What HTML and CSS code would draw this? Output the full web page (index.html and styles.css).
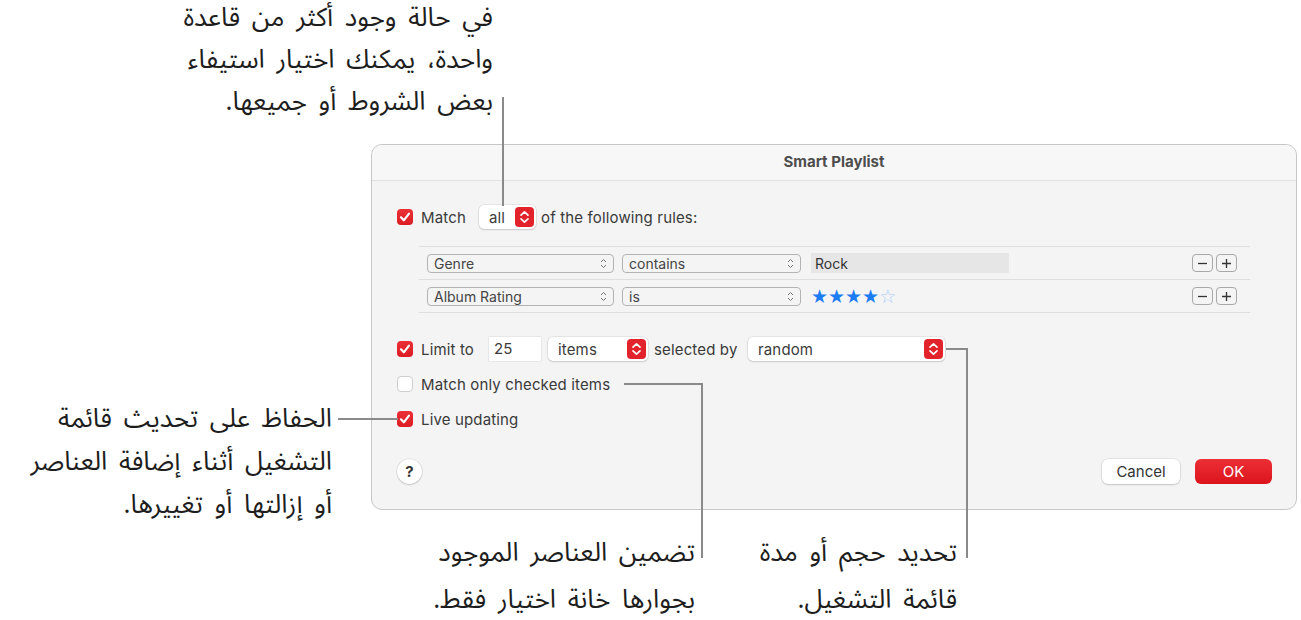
FILE: index.html
```html
<!DOCTYPE html>
<html lang="ar">
<head>
  <meta charset="UTF-8" />
  <title>Smart Playlist</title>
  <link rel="stylesheet" href="styles.css">
</head>
<body>
  <div class="page">

    <div class="dialog">
      <div class="titlebar">Smart Playlist</div>

      <div class="content">
        <div class="row">
          <span class="check on">
            <svg width="16" height="16" viewBox="0 0 16 16"><path d="M4 8.3l2.8 3L12 4.6" stroke="#fff" stroke-width="2.2" fill="none" stroke-linecap="round" stroke-linejoin="round"/></svg>
          </span>
          <span class="label w-match">Match</span>
          <span class="popup popup-all">
            <span>all</span>
            <svg class="arrows" width="19" height="20" viewBox="0 0 19 20"><rect width="19" height="20" rx="4" fill="#e3232b"/><path d="M6 8.2l3.5-3.4 3.5 3.4M6 11.8l3.5 3.4 3.5-3.4" stroke="#fff" stroke-width="1.7" fill="none" stroke-linecap="round" stroke-linejoin="round"/></svg>
          </span>
          <span class="label">of the following rules:</span>
        </div>

        <div class="rules">
          <div class="rule">
            <span class="select w-field">Genre
              <svg width="7" height="11" viewBox="0 0 7 11"><path d="M1 4l2.5-2.5L6 4M1 7l2.5 2.5L6 7" stroke="#777" stroke-width="1" fill="none"/></svg>
            </span>
            <span class="select w-op">contains
              <svg width="7" height="11" viewBox="0 0 7 11"><path d="M1 4l2.5-2.5L6 4M1 7l2.5 2.5L6 7" stroke="#777" stroke-width="1" fill="none"/></svg>
            </span>
            <span class="field">Rock</span>
            <span class="pm">
              <span class="pm-btn"><svg width="11" height="11" viewBox="0 0 11 11"><path d="M1 5.5h9" stroke="#333" stroke-width="1.3"/></svg></span>
              <span class="pm-btn"><svg width="11" height="11" viewBox="0 0 11 11"><path d="M1 5.5h9M5.5 1v9" stroke="#333" stroke-width="1.3"/></svg></span>
            </span>
          </div>
          <div class="rule">
            <span class="select w-field">Album Rating
              <svg width="7" height="11" viewBox="0 0 7 11"><path d="M1 4l2.5-2.5L6 4M1 7l2.5 2.5L6 7" stroke="#777" stroke-width="1" fill="none"/></svg>
            </span>
            <span class="select w-op">is
              <svg width="7" height="11" viewBox="0 0 7 11"><path d="M1 4l2.5-2.5L6 4M1 7l2.5 2.5L6 7" stroke="#777" stroke-width="1" fill="none"/></svg>
            </span>
            <span class="stars">★★★★<span class="star-off">☆</span></span>
            <span class="pm">
              <span class="pm-btn"><svg width="11" height="11" viewBox="0 0 11 11"><path d="M1 5.5h9" stroke="#333" stroke-width="1.3"/></svg></span>
              <span class="pm-btn"><svg width="11" height="11" viewBox="0 0 11 11"><path d="M1 5.5h9M5.5 1v9" stroke="#333" stroke-width="1.3"/></svg></span>
            </span>
          </div>
        </div>

        <div class="row limit-row">
          <span class="check on">
            <svg width="16" height="16" viewBox="0 0 16 16"><path d="M4 8.3l2.8 3L12 4.6" stroke="#fff" stroke-width="2.2" fill="none" stroke-linecap="round" stroke-linejoin="round"/></svg>
          </span>
          <span class="label w-limit">Limit to</span>
          <span class="num">25</span>
          <span class="popup popup-items">
            <span>items</span>
            <svg class="arrows" width="19" height="20" viewBox="0 0 19 20"><rect width="19" height="20" rx="4" fill="#e3232b"/><path d="M6 8.2l3.5-3.4 3.5 3.4M6 11.8l3.5 3.4 3.5-3.4" stroke="#fff" stroke-width="1.7" fill="none" stroke-linecap="round" stroke-linejoin="round"/></svg>
          </span>
          <span class="label w-sel">selected by</span>
          <span class="popup popup-random">
            <span>random</span>
            <svg class="arrows" width="19" height="20" viewBox="0 0 19 20"><rect width="19" height="20" rx="4" fill="#e3232b"/><path d="M6 8.2l3.5-3.4 3.5 3.4M6 11.8l3.5 3.4 3.5-3.4" stroke="#fff" stroke-width="1.7" fill="none" stroke-linecap="round" stroke-linejoin="round"/></svg>
          </span>
        </div>

        <div class="row small-row">
          <span class="check"></span>
          <span class="label">Match only checked items</span>
        </div>

        <div class="row small-row">
          <span class="check on">
            <svg width="16" height="16" viewBox="0 0 16 16"><path d="M4 8.3l2.8 3L12 4.6" stroke="#fff" stroke-width="2.2" fill="none" stroke-linecap="round" stroke-linejoin="round"/></svg>
          </span>
          <span class="label">Live updating</span>
        </div>

        <div class="footer">
          <span class="help">?</span>
          <span class="btn cancel">Cancel</span>
          <span class="btn ok">OK</span>
        </div>
      </div>
    </div>

    <!-- callouts -->
    <div class="note note-top">في حالة وجود أكثر من قاعدة<br>واحدة، يمكنك اختيار استيفاء<br>بعض الشروط أو جميعها.</div>
    <div class="note note-left">الحفاظ على تحديث قائمة<br>التشغيل أثناء إضافة العناصر<br>أو إزالتها أو تغييرها.</div>
    <div class="note note-mid">تضمين العناصر الموجود<br>بجوارها خانة اختيار فقط.</div>
    <div class="note note-right">تحديد حجم أو مدة<br>قائمة التشغيل.</div>

    <div class="line line-top"></div>
    <div class="line line-left"></div>
    <div class="line line-mid-h"></div>
    <div class="line line-mid-v"></div>
    <div class="line line-right-h"></div>
    <div class="line line-right-v"></div>
  </div>
</body>
</html>
```

FILE: styles.css
```css
body {
  margin: 0;
  background: #fff;
  font-family: Inter, "Liberation Sans", sans-serif;
  color: #3b3b3b;
}
.page {
  position: relative;
  width: 1301px;
  height: 620px;
  overflow: hidden;
  padding: 144px 0 0 371px;
  box-sizing: border-box;
}
.dialog {
  width: 926px;
  height: 366px;
  box-sizing: border-box;
  border: 1px solid #c6c6c6;
  border-radius: 11px;
  background: #f4f4f4;
  overflow: hidden;
}
.titlebar {
  height: 35px;
  line-height: 34px;
  background: #f7f7f7;
  border-bottom: 1px solid #e2e2e2;
  text-align: center;
  font-weight: 700;
  font-size: 15px;
  color: #4d4d4d;
}
.content {
  padding: 24px 24px 0 25px;
}
.row {
  display: flex;
  align-items: center;
  height: 24px;
  font-size: 15px;
  letter-spacing: 0.15px;
}
.label {
  margin-left: 8px;
  color: #3a3a3a;
  white-space: nowrap;
}
.w-match {
  width: 50px;
}
.w-limit {
  width: 56px;
}
.w-sel {
  width: 89px;
  margin-left: 6px;
}
.check {
  flex: none;
  width: 16px;
  height: 16px;
  box-sizing: border-box;
  border-radius: 4px;
  background: #fff;
  border: 1px solid #cfcfcf;
  display: flex;
}
.check.on {
  background: linear-gradient(#ea3036, #dc1c23);
  border: none;
}
.popup {
  flex: none;
  display: flex;
  align-items: center;
  height: 24px;
  box-sizing: border-box;
  background: #fff;
  border-radius: 5px;
  box-shadow: 0 0 0 0.5px rgba(0, 0, 0, 0.12), 0 1px 2px rgba(0, 0, 0, 0.12);
  padding: 0 2px 0 10px;
  justify-content: space-between;
}
.popup-all {
  width: 57px;
  margin: 0 -3px 0 8px;
}
.popup-items {
  width: 100px;
  margin-left: 7px;
}
.popup-random {
  width: 197px;
  margin-left: 5px;
}
.num {
  flex: none;
  width: 52px;
  height: 24px;
  line-height: 24px;
  box-sizing: border-box;
  padding-left: 5px;
  margin-left: 12px;
  background: #fff;
  box-shadow: 0 0 0 0.5px rgba(0, 0, 0, 0.1);
}

.rules {
  margin: 17px 22px 0 22px;
  border-top: 1px solid #dedede;
}
.rule {
  display: flex;
  align-items: center;
  height: 32px;
  border-bottom: 1px solid #dedede;
  padding: 0 13px 0 8px;
  font-size: 14px;
}
.select {
  display: flex;
  align-items: center;
  justify-content: space-between;
  height: 19px;
  box-sizing: border-box;
  border: 1px solid #b3b3b3;
  border-radius: 4px;
  padding: 0 6px 0 6px;
  color: #444;
}
.w-field {
  width: 187px;
}
.w-op {
  width: 179px;
  margin-left: 8px;
}
.field {
  width: 198px;
  height: 20px;
  line-height: 22px;
  background: #e6e6e6;
  margin-left: 10px;
  padding-left: 4px;
  box-sizing: border-box;
  color: #333;
}
.stars {
  margin-left: 10px;
  color: #1b7cf4;
  font-size: 19px;
  line-height: 20px;
  font-family: "DejaVu Sans", sans-serif;
}
.star-off {
  color: #a9cdf7;
}
.pm {
  margin-left: auto;
  display: flex;
  gap: 3px;
}
.pm-btn {
  width: 21px;
  height: 18px;
  box-sizing: border-box;
  border: 1px solid #a8a8a8;
  border-radius: 4px;
  display: flex;
  align-items: center;
  justify-content: center;
}

.limit-row {
  margin-top: 24px;
}
.small-row {
  margin-top: 11px;
}
.footer {
  display: flex;
  align-items: center;
  margin-top: 28px;
  height: 25px;
}
.help {
  width: 25px;
  height: 25px;
  border-radius: 50%;
  background: #fff;
  box-shadow: 0 0 0 0.5px rgba(0, 0, 0, 0.12), 0 1px 2px rgba(0, 0, 0, 0.15);
  text-align: center;
  line-height: 25px;
  font-weight: 700;
  font-size: 15px;
  color: #333;
}
.btn {
  height: 25px;
  line-height: 25px;
  border-radius: 6px;
  text-align: center;
  font-size: 15px;
}
.cancel {
  margin-left: auto;
  width: 78px;
  background: #fff;
  box-shadow: 0 0 0 0.5px rgba(0, 0, 0, 0.12), 0 1px 2px rgba(0, 0, 0, 0.15);
  color: #333;
}
.ok {
  margin-left: 15px;
  width: 77px;
  background: linear-gradient(#ec2f35, #dc141c);
  color: #fff;
}

/* callouts */
.note {
  position: absolute;
  direction: rtl;
  text-align: right;
  font-family: "Noto Sans Arabic", "DejaVu Sans", sans-serif;
  font-size: 26px;
  word-spacing: 5px;
  line-height: 42px;
  color: #1d1d1d;
  white-space: nowrap;
}
.note-top {
  right: 808px;
  top: -3px;
}
.note-left {
  right: 969px;
  top: 397px;
  line-height: 43px;
}
.note-mid {
  right: 606px;
  top: 529px;
  line-height: 47px;
}
.note-right {
  right: 344px;
  top: 529px;
  line-height: 47px;
}
.line {
  position: absolute;
  background: #8a8a8a;
}
.line-top {
  left: 502px;
  top: 97px;
  width: 2px;
  height: 109px;
}
.line-left {
  left: 338px;
  top: 418px;
  width: 60px;
  height: 2px;
}
.line-mid-h {
  left: 624px;
  top: 383px;
  width: 79px;
  height: 2px;
}
.line-mid-v {
  left: 701px;
  top: 383px;
  width: 2px;
  height: 175px;
}
.line-right-h {
  left: 946px;
  top: 348px;
  width: 22px;
  height: 2px;
}
.line-right-v {
  left: 966px;
  top: 348px;
  width: 2px;
  height: 210px;
}
```
